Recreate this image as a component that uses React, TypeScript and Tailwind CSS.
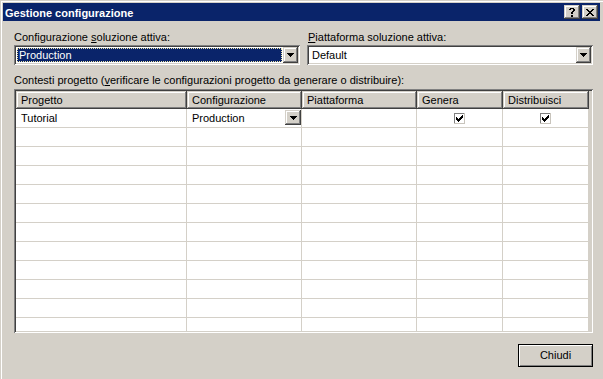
import React from "react";

const raised =
  "shadow-[inset_-1px_-1px_#404040,inset_1px_1px_#d4d0c8,inset_-2px_-2px_#808080,inset_2px_2px_#ffffff]";
const sunken =
  "shadow-[inset_1px_1px_#808080,inset_-1px_-1px_#ffffff,inset_2px_2px_#404040,inset_-2px_-2px_#d4d0c8]";

function Arrow() {
  return (
    <svg width="7" height="4" shapeRendering="crispEdges" fill="#000">
      <rect x="0" y="0" width="7" height="1" />
      <rect x="1" y="1" width="5" height="1" />
      <rect x="2" y="2" width="3" height="1" />
      <rect x="3" y="3" width="1" height="1" />
    </svg>
  );
}

function DropButton({ className }: { className: string }) {
  return (
    <div className={`flex items-center justify-center bg-[#d4d0c8] ${raised} ${className}`}>
      <Arrow />
    </div>
  );
}

function CloseGlyph() {
  const px = [
    [0, 0, 2], [6, 0, 2],
    [1, 1, 2], [5, 1, 2],
    [2, 2, 4],
    [3, 3, 2],
    [2, 4, 4],
    [1, 5, 2], [5, 5, 2],
    [0, 6, 2], [6, 6, 2],
  ];
  return (
    <svg width="8" height="7" shapeRendering="crispEdges" fill="#000">
      {px.map(([x, y, w], i) => (
        <rect key={i} x={x} y={y} width={w} height="1" />
      ))}
    </svg>
  );
}

function HelpGlyph() {
  const px = [
    [1, 0, 4],
    [0, 1, 2], [4, 1, 2],
    [4, 2, 2],
    [3, 3, 2],
    [2, 4, 2],
    [2, 5, 2],
    [2, 7, 2],
    [2, 8, 2],
  ];
  return (
    <svg width="6" height="9" shapeRendering="crispEdges" fill="#000">
      {px.map(([x, y, w], i) => (
        <rect key={i} x={x} y={y} width={w} height="1" />
      ))}
    </svg>
  );
}

function Check() {
  const cols = [2, 3, 4, 3, 2, 1, 0];
  return (
    <svg width="11" height="11" shapeRendering="crispEdges">
      <rect x="0" y="0" width="11" height="11" fill="#fff" />
      <rect x="0" y="0" width="11" height="1" fill="#808080" />
      <rect x="0" y="0" width="1" height="11" fill="#808080" />
      <rect x="0" y="10" width="11" height="1" fill="#c8c4bc" />
      <rect x="10" y="0" width="1" height="11" fill="#c8c4bc" />
      {cols.map((y, i) => (
        <rect key={i} x={2 + i} y={2 + y} width="1" height="3" fill="#000" />
      ))}
    </svg>
  );
}

const columns = [
  { name: "Progetto", w: "w-[171px]" },
  { name: "Configurazione", w: "w-[115px]" },
  { name: "Piattaforma", w: "w-[115px]" },
  { name: "Genera", w: "w-[86px]" },
  { name: "Distribuisci", w: "w-[86px]" },
];

export default function App() {
  const emptyRows = Array.from({ length: 11 });

  return (
    <div className="w-[603px] h-[379px] overflow-hidden bg-[#d4d0c8] font-['Liberation_Sans',Arial,sans-serif] text-[11px] text-black">
      <div className="w-full h-full p-[3px] shadow-[inset_1px_1px_#d4d0c8,inset_2px_2px_#ffffff] flex flex-col">
        {/* Title bar */}
        <div className="h-[18px] bg-[#0a246a] flex items-center pl-[2px] pr-[2px]">
          <span className="flex-1 text-white font-bold leading-[18px] pt-px">Gestione configurazione</span>
          <div className={`w-[16px] h-[14px] bg-[#d4d0c8] flex items-center justify-center ${raised}`}>
            <HelpGlyph />
          </div>
          <div className={`ml-[2px] w-[16px] h-[14px] bg-[#d4d0c8] flex items-center justify-center ${raised}`}>
            <CloseGlyph />
          </div>
        </div>

        {/* Body */}
        <div className="flex-1 flex flex-col pl-[11px] pr-[7px] pt-[10px]">
          <div className="grid grid-cols-[286px_1fr] gap-x-[7px]">
            <div className="h-[13px] leading-[13px]">
              Configurazione <span className="underline">s</span>oluzione attiva:
            </div>
            <div className="h-[13px] leading-[13px] pl-px">
              <span className="underline">P</span>iattaforma soluzione attiva:
            </div>

            <div className={`mt-px h-[20px] bg-white p-[2px] flex ${sunken}`}>
              <div className="flex-1 m-px bg-[#0a246a] text-white border border-dotted border-[#eee6a8] pl-px leading-[12px]">
                Production
              </div>
              <DropButton className="w-[15px] h-[16px]" />
            </div>
            <div className={`mt-px h-[20px] bg-white p-[2px] flex ${sunken}`}>
              <div className="flex-1 m-px border border-transparent pl-px leading-[12px]">Default</div>
              <DropButton className="w-[15px] h-[16px]" />
            </div>
          </div>

          <div className="mt-[9px] h-[13px] leading-[13px]">
            Contesti progetto (<span className="underline">v</span>erificare le configurazioni progetto da generare o distribuire):
          </div>

          {/* Grid */}
          <div className={`mt-[2px] h-[244px] p-[2px] bg-[#d4d0c8] ${sunken}`}>
            <div className="h-full overflow-hidden">
              <div className="flex h-[18px]">
                {columns.map((c) => (
                  <div
                    key={c.name}
                    className={`${c.w} shrink-0 bg-[#d4d0c8] pl-[5px] leading-[18px] ${raised}`}
                  >
                    {c.name}
                  </div>
                ))}
              </div>

              <div className="flex h-[19px] bg-white w-[573px]">
                <div className="w-[171px] shrink-0 border-r border-b border-[#d4d0c8] pl-[5px] leading-[18px]">
                  Tutorial
                </div>
                <div className="w-[115px] shrink-0 border-r border-b border-[#d4d0c8] pl-[5px] flex justify-between">
                  <span className="leading-[18px]">Production</span>
                  <DropButton className="mt-px w-[16px] h-[15px]" />
                </div>
                <div className="w-[115px] shrink-0 border-r border-b border-[#d4d0c8]" />
                <div className="w-[86px] shrink-0 border-r border-b border-[#d4d0c8] flex items-center justify-center">
                  <Check />
                </div>
                <div className="w-[86px] shrink-0 border-r border-b border-[#d4d0c8] flex items-center justify-center">
                  <Check />
                </div>
              </div>

              {emptyRows.map((_, r) => (
                <div key={r} className="flex h-[19px] bg-white w-[573px]">
                  {columns.map((c) => (
                    <div key={c.name} className={`${c.w} shrink-0 border-r border-b border-[#d4d0c8]`} />
                  ))}
                </div>
              ))}
            </div>
          </div>

          <div className="mt-[11px] flex justify-end">
            <button className="w-[75px] h-[23px] border border-black bg-[#d4d0c8] shadow-[inset_1px_1px_#ffffff,inset_-1px_-1px_#808080] flex items-center justify-center leading-[13px]">
              Chiudi
            </button>
          </div>
        </div>
      </div>
    </div>
  );
}
